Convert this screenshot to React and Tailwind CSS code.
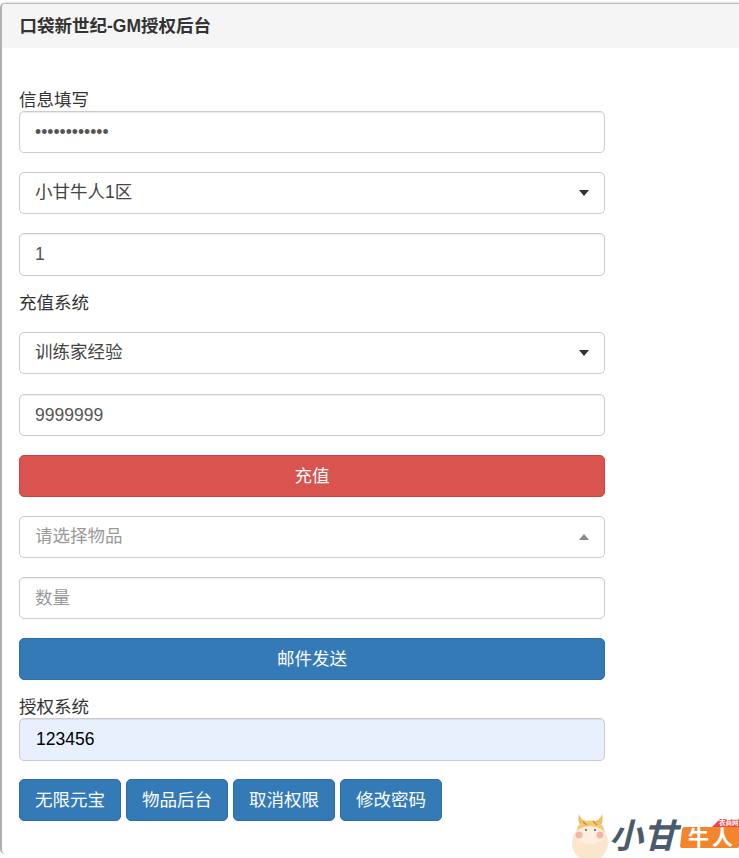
const font = { fontFamily: '"Liberation Sans", "Noto Sans CJK SC", sans-serif' };

function TextInput({ type = 'text', value, placeholder, tall }) {
  return (
    <input
      type={type}
      defaultValue={value}
      placeholder={placeholder}
      className={`block w-full ${tall ? 'h-[43px]' : 'h-[42px]'} rounded-[5px] border border-[#ccc] bg-white px-[15px] text-[17.5px] text-[#555] placeholder:text-[#999] shadow-[inset_0_1px_1px_rgba(0,0,0,0.075)] outline-none`}
    />
  );
}

function Select({ label, muted, up }) {
  return (
    <div className="flex items-center justify-between h-[42px] rounded-[5px] border border-[#ccc] bg-white pl-[15px] pr-[15px]">
      <span className={`pb-px text-[17.5px] ${muted ? 'text-[#999]' : 'text-[#444]'}`}>{label}</span>
      {up ? (
        <span className="w-0 h-0 border-x-[5px] border-x-transparent border-b-[6px] border-b-[#888]" />
      ) : (
        <span className="w-0 h-0 border-x-[5px] border-x-transparent border-t-[6px] border-t-[#333]" />
      )}
    </div>
  );
}

function Field({ children }) {
  return <div className="mb-[19px]">{children}</div>;
}

function SmallBtn({ children }) {
  return (
    <button className="h-[42px] w-[102px] rounded-[5px] border border-[#2e6da4] bg-[#337ab7] text-[17.5px] text-white">
      {children}
    </button>
  );
}

function Logo() {
  return (
    <div className="absolute right-0 bottom-0 w-[170px] h-[52px]">
      <svg viewBox="0 0 170 52" className="absolute inset-0 w-full h-full">
        <circle cx="21" cy="37" r="18" fill="#fbe6cd" />
        <path d="M10 8 Q8 16 12 20 L17 15 Q12 14 10 8 Z" fill="#f0bd62" />
        <path d="M33 8 Q35 16 31 20 L26 15 Q31 14 33 8 Z" fill="#f0bd62" />
        <path d="M9 20 Q21 9 34 20 L36 27 Q21 21 7 27 Z" fill="#f5c970" />
        <path d="M14 16 L18 19 M24 15 L28 19" stroke="#c98a3a" strokeWidth="1.5" />
        <ellipse cx="21" cy="29" rx="15" ry="9" fill="#fdeee0" />
        <circle cx="10" cy="29" r="3.5" fill="#f3b6a5" />
        <circle cx="31" cy="29" r="3.5" fill="#f3b6a5" />
        <circle cx="17" cy="24" r="1" fill="#555" />
        <circle cx="26" cy="24" r="1" fill="#555" />
        <path d="M116 21 H170 V40 Q170 42 167 42 H114 Q111 42 111 40 L113 24 Q113 21 116 21 Z" fill="#f4852c" />
        <path d="M143 21 L151 13 H170 V21 Z" fill="#e8464b" />
      </svg>
      <span className="absolute left-[40px] top-[8px] text-[34px] leading-[44px] font-bold italic text-[#4a5b6c]">小甘</span>
      <span className="absolute left-[119px] top-[17px] text-[21px] leading-[30px] font-bold text-white tracking-[3px]">牛人</span>
      <span className="absolute left-[150px] top-[12px] text-[6.5px] leading-[10px] font-bold text-white">农商网</span>
    </div>
  );
}

export default function App() {
  return (
    <div style={font} className="relative w-[739px] h-[858px] overflow-hidden bg-white text-[17.5px] text-[#333]">
      <div className="mt-[3px] w-[760px] h-[851px] rounded-[5px] border-t border-t-[#bbb] border-l-2 border-l-[#b0b0b0] shadow-[0_-1px_2px_rgba(0,0,0,0.12)] bg-white">
        <div className="h-[44px] flex items-center pl-[17.5px] bg-[#f5f5f5] rounded-t-[5px] font-bold text-[17.5px] text-[#333]">
          口袋新世纪-GM授权后台
        </div>
        <div className="w-[586px] ml-[17px] pt-[39px]">
          <div className="h-[25px] leading-[27px] -mb-[1px] whitespace-nowrap">信息填写</div>
          <Field><TextInput type="password" value="123456789012" /></Field>
          <Field><Select label="小甘牛人1区" /></Field>
          <div className="mb-[14px]"><TextInput tall value="1" /></div>
          <div className="h-[25px] leading-[27px] mb-[17px]">充值系统</div>
          <div className="mb-[20px]"><Select label="训练家经验" /></div>
          <Field><TextInput value="9999999" /></Field>
          <Field>
            <button className="block w-full h-[42px] rounded-[5px] border border-[#d43f3a] bg-[#d9534f] text-[17.5px] text-white">充值</button>
          </Field>
          <Field><Select label="请选择物品" muted up /></Field>
          <Field><TextInput placeholder="数量" /></Field>
          <div className="mb-[14px]">
            <button className="block w-full h-[42px] rounded-[5px] border border-[#2e6da4] bg-[#337ab7] text-[17.5px] text-white">邮件发送</button>
          </div>
          <div className="h-[25px] leading-[27px] -mb-[1px]">授权系统</div>
          <div className="mb-[18px]">
            <input
              defaultValue="123456"
              className="block w-full h-[43px] rounded-[5px] border border-[#ccc] bg-[#e8f0fe] pl-[16px] pr-[15px] text-[17.5px] text-black outline-none shadow-[inset_0_1px_1px_rgba(0,0,0,0.075)]"
            />
          </div>
          <div className="flex gap-[5px]">
            <SmallBtn>无限元宝</SmallBtn>
            <SmallBtn>物品后台</SmallBtn>
            <SmallBtn>取消权限</SmallBtn>
            <SmallBtn>修改密码</SmallBtn>
          </div>
        </div>
      </div>
      <Logo />
    </div>
  );
}
